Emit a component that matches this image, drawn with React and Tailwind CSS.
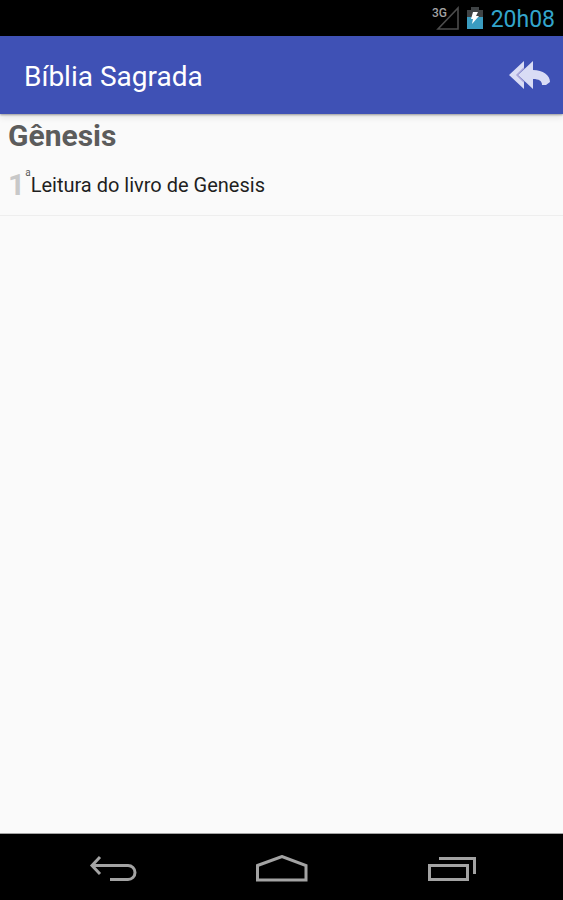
const readings = [{ id: 1, ordinal: "1", suffix: "a", title: "Leitura do livro de Genesis" }];

function SignalIcon() {
  return (
    <svg width="28" height="24" viewBox="0 0 28 24" role="img" aria-label="3G">
      <path d="M27 2v21H7z" fill="none" stroke="#4c4c4c" strokeWidth="1.6" />
      <text x="1" y="11" fontSize="12" fontWeight="500" fontFamily="Roboto, sans-serif" fill="#a3a3a3" stroke="#000" strokeWidth="3" paintOrder="stroke">
        3G
      </text>
    </svg>
  );
}

function BatteryIcon() {
  return (
    <svg width="16" height="24" viewBox="0 0 16 24" aria-hidden="true">
      <path d="M4 1h8v3h4v8H0V4h4z" fill="#3f4345" />
      <path d="M0 11h16v12H0z" fill="#3a9cc0" />
      <path d="M6 6h5l-2 4h3l-7 8 1-5H4z" fill="#fff" />
    </svg>
  );
}

function ReplyAllIcon() {
  return (
    <svg width="42" height="30" viewBox="0 0 42 30" aria-hidden="true">
      <path d="M0 15 15 1v7L9 15l6 7v7z" fill="#d9dcf5" />
      <path d="M9 15 24 1v9c10 0 17 5 17 12l-4 3-4 0c0-4-3-6-9-6v10z" fill="#d9dcf5" />
      <path d="M15 8 8 15l7 7" fill="none" stroke="#a9a6d8" strokeWidth="1.5" />
    </svg>
  );
}

function StatusBar() {
  return (
    <div className="flex h-9 items-center justify-end bg-black pr-2">
      <SignalIcon />
      <span className="ml-2 mr-2 flex">
        <BatteryIcon />
      </span>
      <time className="pt-1 text-[23px] leading-8 text-[#33a5cc]">20h08</time>
    </div>
  );
}

function NavBar() {
  return (
    <nav className="grid h-[67px] grid-cols-3 border-t border-[#a3a3a3] bg-black px-7 pt-1 text-[#a3a3a3]">
      <button aria-label="Voltar" className="flex items-center justify-center">
        <svg width="48" height="28" viewBox="0 0 48 28" fill="none" stroke="currentColor" strokeWidth="3">
          <path d="M11 2 3 10.5l8 8.500M3 10.500h36a7 7 0 0 1 0 14H21" />
        </svg>
      </button>
      <button aria-label="Início" className="flex items-center justify-center">
        <svg width="52" height="28" viewBox="0 0 52 28" fill="none" stroke="currentColor" strokeWidth="3">
          <path d="M1.500 10.500 26 1.500l24 9v14.500H1.500z" />
        </svg>
      </button>
      <button aria-label="Recentes" className="flex items-center justify-center">
        <svg width="50" height="28" viewBox="0 0 50 28" fill="none" stroke="currentColor" strokeWidth="3">
          <path d="M3.500 10.500h38v14h-38zM13 3.500h35.500V19" />
        </svg>
      </button>
    </nav>
  );
}

export default function App() {
  return (
    <div className="flex min-h-screen flex-col bg-[#fafafa] font-['Roboto',sans-serif]">
      <StatusBar />
      <header className="flex h-[78px] items-center justify-between bg-[#3f51b5] pl-6 pr-3 shadow-[0_1px_2px_rgba(0,0,0,0.35),0_4px_6px_rgba(0,0,0,0.08)]">
        <h1 className="pt-1 text-[28px] leading-9 text-white">Bíblia Sagrada</h1>
        <button aria-label="Voltar ao início">
          <ReplyAllIcon />
        </button>
      </header>

      <main className="flex-1">
        <h2 className="px-2 pt-1 text-[30px] font-bold leading-9 text-[#5c5c5c]">Gênesis</h2>
        <ul>
          {readings.map((reading) => (
            <li key={reading.id} className="border-b border-[#eeeeee] px-2 pb-3 pt-[13px]">
              <a href="#leitura" className="flex h-9 items-center">
                <span className="text-[30px] font-bold leading-9 text-[#c8c8c8]">{reading.ordinal}</span>
                <span className="self-start text-[10px] leading-3 text-[#5c5c5c]">{reading.suffix}</span>
                <span className="text-[20px] leading-9 text-[#1f1f1f]">{reading.title}</span>
              </a>
            </li>
          ))}
        </ul>
      </main>

      <NavBar />
    </div>
  );
}
